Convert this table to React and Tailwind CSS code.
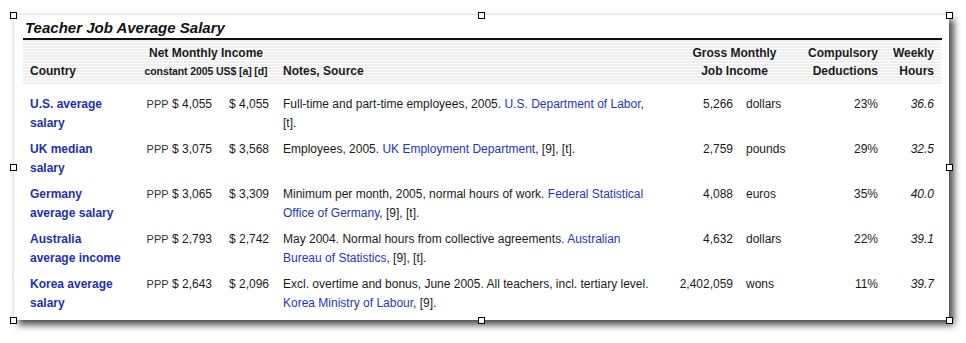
import React from 'react';

const rows = [
  {
    country: 'U.S. average salary',
    ppp: '4,055',
    usd: '4,055',
    notes: 'Full-time and part-time employees, 2005. ',
    link: 'U.S. Department of Labor',
    tail: ', [t].',
    gross: '5,266',
    unit: 'dollars',
    ded: '23%',
    hours: '36.6',
  },
  {
    country: 'UK median salary',
    ppp: '3,075',
    usd: '3,568',
    notes: 'Employees, 2005. ',
    link: 'UK Employment Department',
    tail: ', [9], [t].',
    gross: '2,759',
    unit: 'pounds',
    ded: '29%',
    hours: '32.5',
  },
  {
    country: 'Germany average salary',
    ppp: '3,065',
    usd: '3,309',
    notes: 'Minimum per month, 2005, normal hours of work. ',
    link: 'Federal Statistical Office of Germany',
    tail: ', [9], [t].',
    gross: '4,088',
    unit: 'euros',
    ded: '35%',
    hours: '40.0',
  },
  {
    country: 'Australia average income',
    ppp: '2,793',
    usd: '2,742',
    notes: 'May 2004. Normal hours from collective agreements. ',
    link: 'Australian Bureau of Statistics',
    tail: ', [9], [t].',
    gross: '4,632',
    unit: 'dollars',
    ded: '22%',
    hours: '39.1',
  },
  {
    country: 'Korea average salary',
    ppp: '2,643',
    usd: '2,096',
    notes: 'Excl. overtime and bonus, June 2005. All teachers, incl. tertiary level. ',
    link: 'Korea Ministry of Labour',
    tail: ', [9].',
    gross: '2,402,059',
    unit: 'wons',
    ded: '11%',
    hours: '39.7',
  },
];

const Handle = ({ className }) => (
  <div className={`absolute w-[7px] h-[7px] bg-white border border-black ${className}`} />
);

const App = () => {
  return (
    <div
      className="w-[966px] h-[343px] bg-white pl-[13px] pt-[14px]"
      style={{ fontFamily: '"Liberation Sans", Arial, sans-serif' }}
    >
      <div className="relative w-[936px] h-[306px] bg-white border-l border-t border-[#e2e2e2] shadow-[5px_5px_7px_rgba(0,0,0,0.7)]">
        {/* content */}
        <div className="pl-[9px] pr-[7px] pt-[4px] overflow-hidden h-full">
          <h1 className="text-[15px] leading-[18px] font-bold italic text-[#111] pl-[2px]">
            Teacher Job Average Salary
          </h1>
          <div className="h-[2px] bg-[#111] mt-[1px]" />
          <table className="table-fixed border-collapse w-[918px] text-[12px] text-[#1a1a1a]">
            <colgroup>
              <col className="w-[112px]" />
              <col className="w-[79px]" />
              <col className="w-[59px]" />
              <col className="w-[392px]" />
              <col className="w-[70px]" />
              <col className="w-[65px]" />
              <col className="w-[80px]" />
              <col className="w-[61px]" />
            </colgroup>
            <thead>
              <tr className="bg-[repeating-linear-gradient(to_bottom,#efefef_0px,#efefef_2px,#ffffff_2px,#ffffff_3px)] font-bold leading-[18px]">
                <th className="text-left align-bottom pl-[7px] pt-[4px] pb-[4px]">Country</th>
                <th colSpan={2} className="text-center align-bottom pt-[4px] pb-[4px] pl-[4px]">
                  <div>Net Monthly Income</div>
                  <div className="text-[10.5px] tracking-[-0.1px]">constant 2005 US$ [a] [d]</div>
                </th>
                <th className="text-left align-bottom pl-[10px] pt-[4px] pb-[4px]">Notes, Source</th>
                <th colSpan={2} className="text-center align-bottom pt-[4px] pb-[4px] pl-[4px]">
                  <div>Gross Monthly</div>
                  <div>Job Income</div>
                </th>
                <th className="text-right align-bottom pr-[2px] pt-[4px] pb-[4px]">
                  <div>Compulsory</div>
                  <div>Deductions</div>
                </th>
                <th className="text-right align-bottom pr-[7px] pt-[4px] pb-[4px]">
                  <div>Weekly</div>
                  <div>Hours</div>
                </th>
              </tr>
            </thead>
            <tbody>
              <tr className="h-[7px]">
                <td colSpan={8} />
              </tr>
              {rows.map((r) => (
                <tr key={r.country} className="leading-[18.5px] align-top">
                  <td className="pl-[7px] pr-[5px] pt-[4px] pb-[4px] font-bold text-[#1c2fb6]">{r.country}</td>
                  <td className="text-right pr-[2px] pt-[4px] pb-[4px] whitespace-nowrap">
                    <span className="text-[11px] text-[#333]">PPP</span> $ {r.ppp}
                  </td>
                  <td className="text-right pr-[4px] pt-[4px] pb-[4px] whitespace-nowrap">$ {r.usd}</td>
                  <td className="pl-[10px] pr-[12px] pt-[4px] pb-[4px]">
                    {r.notes}
                    <span className="text-[#2236c4]">{r.link}</span>
                    {r.tail}
                  </td>
                  <td className="text-right pr-[2px] pt-[4px] pb-[4px]">{r.gross}</td>
                  <td className="pl-[11px] pt-[4px] pb-[4px]">{r.unit}</td>
                  <td className="text-right pr-[2px] pt-[4px] pb-[4px]">{r.ded}</td>
                  <td className="text-right pr-[7px] pt-[4px] pb-[4px] italic">{r.hours}</td>
                </tr>
              ))}
            </tbody>
          </table>
        </div>

        {/* selection handles */}
        <Handle className="-left-[4px] -top-[3px]" />
        <Handle className="left-[464px] -top-[3px]" />
        <Handle className="-right-[4px] -top-[3px]" />
        <Handle className="-left-[4px] top-[149px]" />
        <Handle className="-right-[4px] top-[149px]" />
        <Handle className="-left-[4px] -bottom-[4px]" />
        <Handle className="left-[464px] -bottom-[4px]" />
        <Handle className="-right-[4px] -bottom-[4px]" />
      </div>
    </div>
  );
};

export default App;
